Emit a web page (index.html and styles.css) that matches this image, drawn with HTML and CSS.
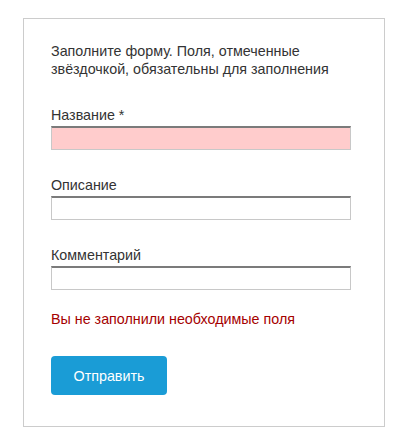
FILE: index.html
```html
<!DOCTYPE html>
<html lang="ru">
<head>
<meta charset="utf-8">
<title>Форма</title>
<link rel="stylesheet" href="styles.css">
</head>
<body>
<form class="card">
  <p class="intro">Заполните форму. Поля, отмеченные звёздочкой, обязательны для заполнения</p>
  <div class="field field-first">
    <label class="label" for="name">Название *</label>
    <input class="input input-error" id="name" type="text">
  </div>
  <div class="field">
    <label class="label" for="desc">Описание</label>
    <input class="input" id="desc" type="text">
  </div>
  <div class="field">
    <label class="label" for="comment">Комментарий</label>
    <input class="input" id="comment" type="text">
  </div>
  <p class="error">Вы не заполнили необходимые поля</p>
  <button class="submit" type="button">Отправить</button>
</form>
</body>
</html>
```
FILE: styles.css
```css
html, body {
  margin: 0;
  padding: 0;
  background: #fff;
}
body {
  padding: 18px 0 0 23px;
  font-family: "Liberation Sans", Arial, sans-serif;
  font-size: 14.3px;
  color: #333;
}
.card {
  box-sizing: border-box;
  width: 362px;
  height: 409px;
  border: 1px solid #cccccc;
  padding: 23px 27px 0 27px;
  display: flex;
  flex-direction: column;
  align-items: flex-start;
}
.intro {
  margin: 0;
  line-height: 18px;
  width: 300px;
}
.field {
  display: flex;
  flex-direction: column;
  margin-top: 26px;
}
.field-first {
  margin-top: 28px;
}
.label {
  display: block;
  line-height: 18px;
  height: 18px;
}
.input {
  box-sizing: border-box;
  width: 300px;
  height: 24px;
  margin: 2px 0 0 0;
  padding: 0 4px;
  border: 1px solid #c8c8c8;
  border-top: 2px solid #7b7b7b;
  background: #fff;
  font: inherit;
  outline: none;
}
.input-error {
  background: #ffcccc;
}
.error {
  margin: 20px 0 0 0;
  line-height: 18px;
  color: #a50000;
}
.submit {
  margin-top: 28px;
  width: 116px;
  height: 39px;
  border: none;
  border-radius: 4px;
  background: #1a9cd6;
  color: #fff;
  font-family: "Liberation Sans", Arial, sans-serif;
  font-size: 14.3px;
  padding: 0;
  cursor: pointer;
}
```
